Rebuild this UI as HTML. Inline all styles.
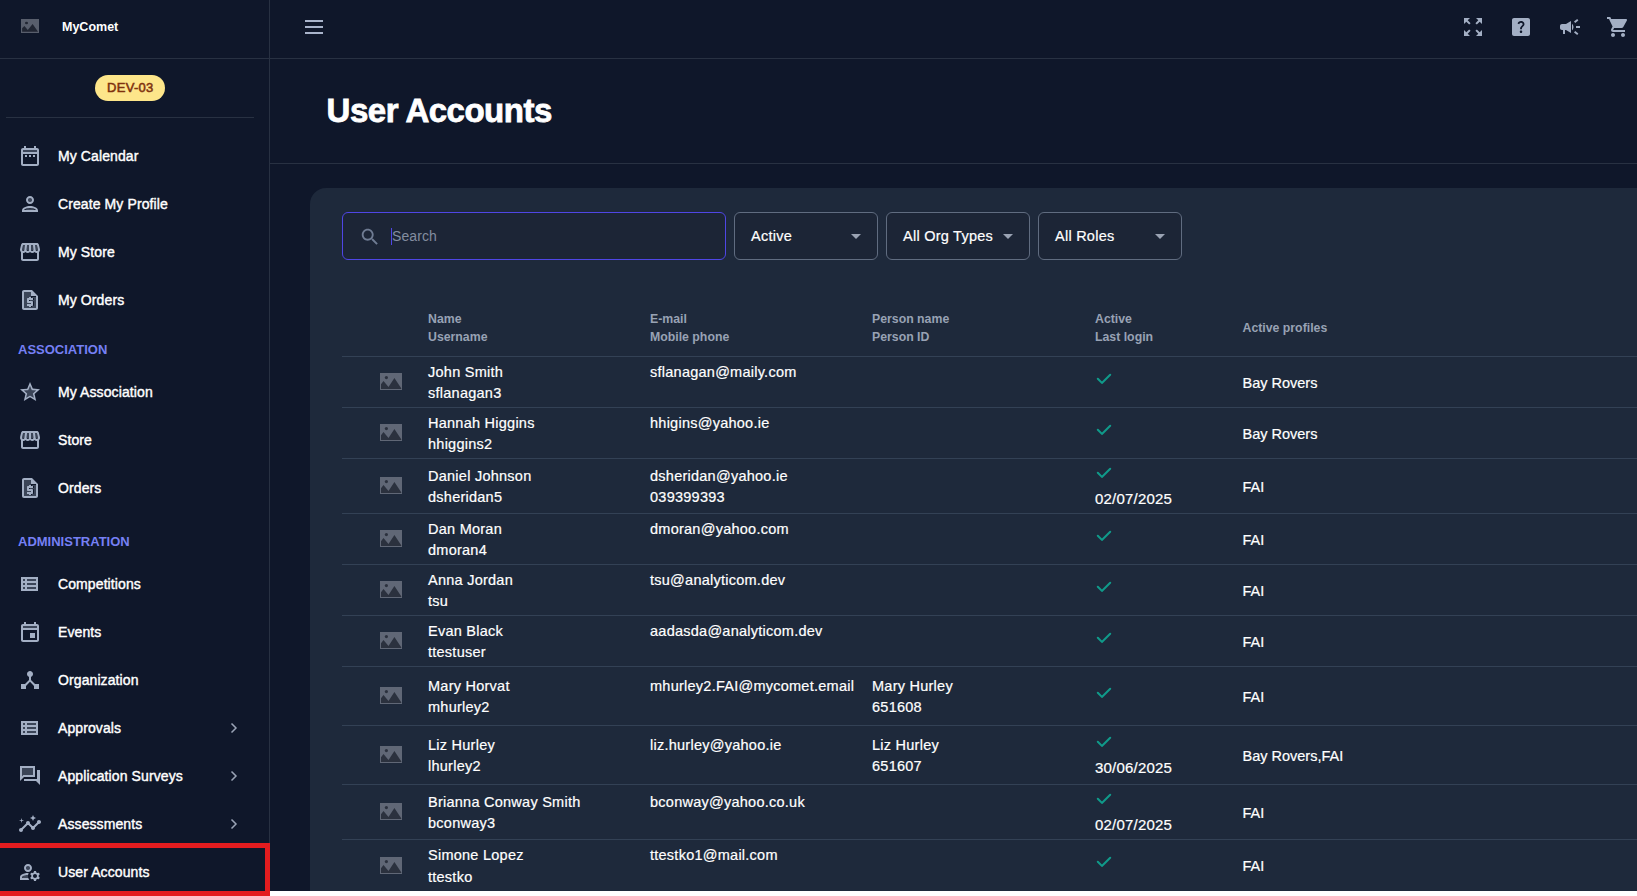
<!DOCTYPE html>
<html><head><meta charset="utf-8"><title>User Accounts</title>
<style>
html,body{margin:0;padding:0}
body{width:1637px;height:896px;overflow:hidden;position:relative;background:#0f172a;font-family:"Liberation Sans",sans-serif}
.abs{position:absolute}
.t{position:absolute;white-space:nowrap}
svg{display:block}
</style></head><body>
<div class="abs" style="left:269px;top:0;width:1px;height:891px;background:#283142"></div>
<div class="abs" style="left:0;top:58px;width:1637px;height:1px;background:#283142"></div>
<svg class="abs" style="left:21px;top:19px" width="18" height="14" viewBox="0 0 18 14"><rect width="18" height="14" fill="#585e6c"/><path d="M1.1 9.3 L3.4 7 L6.8 11 L11.6 5 L16.9 12.4 V12.7 H1.1 Z" fill="#202532"/><ellipse cx="5.5" cy="4" rx="1.5" ry="1.2" fill="#202532"/></svg>
<div class="t" style="left:62px;top:21.42px;font-size:12.5px;line-height:12.5px;color:#fff;font-weight:700;letter-spacing:0px;">MyComet</div>
<div class="abs" style="left:95px;top:75px;width:70px;height:26px;border-radius:13px;background:#fde68a"></div>
<div class="t" style="left:107px;top:81.00px;font-size:13px;line-height:13px;color:#7f310e;font-weight:400;letter-spacing:0.3px;-webkit-text-stroke:0.55px #7f310e;">DEV-03</div>
<div class="abs" style="left:6px;top:117px;width:248px;height:1px;background:#283142"></div>
<svg style="position:absolute;left:18px;top:144px" width="24" height="24" viewBox="0 0 24 24" fill="#a3afc4"><path d="M5 6h14v2H5z" opacity=".3"/><path d="M7 11h2v2H7v-2zm14-5v14c0 1.1-.9 2-2 2H5c-1.11 0-2-.9-2-2l.01-14c0-1.1.88-2 1.99-2h1V2h2v2h8V2h2v2h1c1.1 0 2 .9 2 2zM5 8h14V6H5v2zm14 12V10H5v10h14zm-4-7h2v-2h-2v2zm-4 0h2v-2h-2v2z"/></svg>
<div class="t" style="left:58px;top:149.15px;font-size:14px;line-height:14px;color:#fff;font-weight:400;letter-spacing:0.1px;-webkit-text-stroke:0.4px #fff;">My Calendar</div>
<svg style="position:absolute;left:18px;top:192px" width="24" height="24" viewBox="0 0 24 24" fill="#a3afc4"><circle cx="12" cy="8" r="2" opacity=".3"/><path d="M6 19.5c.2-1.4 3-3 6-3s5.8 1.6 6 3z" opacity=".3"/><path d="M12 14c-3.5 0-8 1.6-8 4.5V20h16v-1.5c0-2.9-4.5-4.5-8-4.5zm-6 4c.4-1.2 3.3-2.1 6-2.1s5.6.9 6 2.1H6zM12 12c2.21 0 4-1.79 4-4s-1.79-4-4-4-4 1.79-4 4 1.79 4 4 4zm0-6c1.1 0 2 .9 2 2s-.9 2-2 2-2-.9-2-2 .9-2 2-2z"/></svg>
<div class="t" style="left:58px;top:197.15px;font-size:14px;line-height:14px;color:#fff;font-weight:400;letter-spacing:0.1px;-webkit-text-stroke:0.4px #fff;">Create My Profile</div>
<svg style="position:absolute;left:18px;top:240px" width="24" height="24" viewBox="0 0 24 24" fill="#a3afc4"><path d="M5 5h14l1.2 5H3.8z" opacity=".3"/><path d="M21.9 8.89l-1.05-4.37c-.22-.9-1-1.52-1.91-1.52H5.05c-.9 0-1.69.63-1.9 1.52L2.1 8.89c-.24 1.02-.02 2.06.62 2.88.08.11.19.19.28.29V19c0 1.1.9 2 2 2h14c1.1 0 2-.9 2-2v-6.94c.09-.09.2-.18.28-.28.64-.82.87-1.87.62-2.89zm-2.99-3.9l1.05 4.37c.1.42.01.84-.25 1.17-.14.18-.44.47-.94.47-.61 0-1.14-.49-1.21-1.14L16.98 5l1.93-.01zM13 5h1.96l.54 4.52c.05.39-.07.78-.33 1.07-.22.26-.54.41-.95.41-.67 0-1.22-.59-1.22-1.31V5zM8.49 9.52L9.04 5H11v4.69c0 .72-.55 1.31-1.29 1.31-.34 0-.65-.15-.89-.41-.25-.29-.37-.68-.33-1.07zm-4.45-.16L5.05 5h1.97l-.58 4.86c-.08.65-.6 1.14-1.21 1.14-.49 0-.8-.29-.93-.47-.27-.32-.36-.75-.26-1.17zM5 19v-6.03c.08.01.15.03.23.03.87 0 1.66-.36 2.24-.95.6.6 1.4.95 2.31.95.87 0 1.65-.36 2.23-.93.59.57 1.39.93 2.29.93.84 0 1.64-.35 2.24-.95.58.59 1.37.95 2.24.95.08 0 .15-.02.23-.03V19H5z"/></svg>
<div class="t" style="left:58px;top:245.15px;font-size:14px;line-height:14px;color:#fff;font-weight:400;letter-spacing:0.1px;-webkit-text-stroke:0.4px #fff;">My Store</div>
<svg style="position:absolute;left:18px;top:288px" width="24" height="24" viewBox="0 0 24 24" fill="#a3afc4"><path d="M13 4H6v16h12V9h-5V4zm3 10v3c0 .55-.45 1-1 1h-1v1h-2v-1h-2v-2h4v-1h-3c-.55 0-1-.45-1-1v-3c0-.55.45-1 1-1h1V9h2v1h2v2h-4v1h3c.55 0 1 .45 1 1z" opacity=".3"/><path d="M14 2H6c-1.1 0-1.99.9-1.99 2L4 20c0 1.1.89 2 1.99 2H18c1.1 0 2-.9 2-2V8l-6-6zM6 20V4h7v4h5v12H6zm5-1h2v-1h1c.55 0 1-.45 1-1v-3c0-.55-.45-1-1-1h-3v-1h4v-2h-2V9h-2v1h-1c-.55 0-1 .45-1 1v3c0 .55.45 1 1 1h3v1H9v2h2v1z"/><path d="M14 3.5V8h4.5z"/></svg>
<div class="t" style="left:58px;top:293.15px;font-size:14px;line-height:14px;color:#fff;font-weight:400;letter-spacing:0.1px;-webkit-text-stroke:0.4px #fff;">My Orders</div>
<svg style="position:absolute;left:18px;top:380px" width="24" height="24" viewBox="0 0 24 24" fill="#a3afc4"><path d="M12 15.4l-3.76 2.27 1-4.28-3.32-2.88 4.38-.38L12 6.1l1.71 4.04 4.38.38-3.32 2.88 1 4.28z" opacity=".3"/><path d="M22 9.24l-7.19-.62L12 2 9.19 8.63 2 9.24l5.46 4.73L5.82 21 12 17.27 18.18 21l-1.63-7.03L22 9.24zM12 15.4l-3.76 2.27 1-4.28-3.32-2.88 4.38-.38L12 6.1l1.71 4.04 4.38.38-3.32 2.88 1 4.28L12 15.4z"/></svg>
<div class="t" style="left:58px;top:385.15px;font-size:14px;line-height:14px;color:#fff;font-weight:400;letter-spacing:0.1px;-webkit-text-stroke:0.4px #fff;">My Association</div>
<svg style="position:absolute;left:18px;top:428px" width="24" height="24" viewBox="0 0 24 24" fill="#a3afc4"><path d="M5 5h14l1.2 5H3.8z" opacity=".3"/><path d="M21.9 8.89l-1.05-4.37c-.22-.9-1-1.52-1.91-1.52H5.05c-.9 0-1.69.63-1.9 1.52L2.1 8.89c-.24 1.02-.02 2.06.62 2.88.08.11.19.19.28.29V19c0 1.1.9 2 2 2h14c1.1 0 2-.9 2-2v-6.94c.09-.09.2-.18.28-.28.64-.82.87-1.87.62-2.89zm-2.99-3.9l1.05 4.37c.1.42.01.84-.25 1.17-.14.18-.44.47-.94.47-.61 0-1.14-.49-1.21-1.14L16.98 5l1.93-.01zM13 5h1.96l.54 4.52c.05.39-.07.78-.33 1.07-.22.26-.54.41-.95.41-.67 0-1.22-.59-1.22-1.31V5zM8.49 9.52L9.04 5H11v4.69c0 .72-.55 1.31-1.29 1.31-.34 0-.65-.15-.89-.41-.25-.29-.37-.68-.33-1.07zm-4.45-.16L5.05 5h1.97l-.58 4.86c-.08.65-.6 1.14-1.21 1.14-.49 0-.8-.29-.93-.47-.27-.32-.36-.75-.26-1.17zM5 19v-6.03c.08.01.15.03.23.03.87 0 1.66-.36 2.24-.95.6.6 1.4.95 2.31.95.87 0 1.65-.36 2.23-.93.59.57 1.39.93 2.29.93.84 0 1.64-.35 2.24-.95.58.59 1.37.95 2.24.95.08 0 .15-.02.23-.03V19H5z"/></svg>
<div class="t" style="left:58px;top:433.15px;font-size:14px;line-height:14px;color:#fff;font-weight:400;letter-spacing:0.1px;-webkit-text-stroke:0.4px #fff;">Store</div>
<svg style="position:absolute;left:18px;top:476px" width="24" height="24" viewBox="0 0 24 24" fill="#a3afc4"><path d="M13 4H6v16h12V9h-5V4zm3 10v3c0 .55-.45 1-1 1h-1v1h-2v-1h-2v-2h4v-1h-3c-.55 0-1-.45-1-1v-3c0-.55.45-1 1-1h1V9h2v1h2v2h-4v1h3c.55 0 1 .45 1 1z" opacity=".3"/><path d="M14 2H6c-1.1 0-1.99.9-1.99 2L4 20c0 1.1.89 2 1.99 2H18c1.1 0 2-.9 2-2V8l-6-6zM6 20V4h7v4h5v12H6zm5-1h2v-1h1c.55 0 1-.45 1-1v-3c0-.55-.45-1-1-1h-3v-1h4v-2h-2V9h-2v1h-1c-.55 0-1 .45-1 1v3c0 .55.45 1 1 1h3v1H9v2h2v1z"/><path d="M14 3.5V8h4.5z"/></svg>
<div class="t" style="left:58px;top:481.15px;font-size:14px;line-height:14px;color:#fff;font-weight:400;letter-spacing:0.1px;-webkit-text-stroke:0.4px #fff;">Orders</div>
<svg style="position:absolute;left:18px;top:572px" width="24" height="24" viewBox="0 0 24 24" fill="#a3afc4"><path d="M5 7h2v2H5zm0 4h2v2H5zm0 4h2v2H5zm4-8h9v2H9zm0 4h9v2H9zm0 4h9v2H9z" opacity=".3"/><path d="M3 5v14h17V5H3zm4 2v2H5V7h2zm-2 6v-2h2v2H5zm0 2h2v2H5v-2zm13 2H9v-2h9v2zm0-4H9v-2h9v2zm0-4H9V7h9v2z"/></svg>
<div class="t" style="left:58px;top:577.15px;font-size:14px;line-height:14px;color:#fff;font-weight:400;letter-spacing:0.1px;-webkit-text-stroke:0.4px #fff;">Competitions</div>
<svg style="position:absolute;left:18px;top:620px" width="24" height="24" viewBox="0 0 24 24" fill="#a3afc4"><path d="M5 6h14v2H5z" opacity=".3"/><path d="M19 4h-1V2h-2v2H8V2H6v2H5c-1.11 0-1.99.9-1.99 2L3 20c0 1.1.89 2 2 2h14c1.1 0 2-.9 2-2V6c0-1.1-.9-2-2-2zm0 16H5V10h14v10zm0-12H5V6h14v2zm-7 5h5v5h-5z"/></svg>
<div class="t" style="left:58px;top:625.15px;font-size:14px;line-height:14px;color:#fff;font-weight:400;letter-spacing:0.1px;-webkit-text-stroke:0.4px #fff;">Events</div>
<svg style="position:absolute;left:18px;top:668px" width="24" height="24" viewBox="0 0 24 24" fill="#a3afc4"><path d="M17 16l-4-4V8.82C14.16 8.4 15 7.3 15 6c0-1.66-1.34-3-3-3S9 4.34 9 6c0 1.3.84 2.4 2 2.82V12l-4 4H3v5h5v-3.05l4-4.2 4 4.2V21h5v-5h-4z"/></svg>
<div class="t" style="left:58px;top:673.15px;font-size:14px;line-height:14px;color:#fff;font-weight:400;letter-spacing:0.1px;-webkit-text-stroke:0.4px #fff;">Organization</div>
<svg style="position:absolute;left:18px;top:716px" width="24" height="24" viewBox="0 0 24 24" fill="#a3afc4"><path d="M5 7h2v2H5zm0 4h2v2H5zm0 4h2v2H5zm4-8h9v2H9zm0 4h9v2H9zm0 4h9v2H9z" opacity=".3"/><path d="M3 5v14h17V5H3zm4 2v2H5V7h2zm-2 6v-2h2v2H5zm0 2h2v2H5v-2zm13 2H9v-2h9v2zm0-4H9v-2h9v2zm0-4H9V7h9v2z"/></svg>
<div class="t" style="left:58px;top:721.15px;font-size:14px;line-height:14px;color:#fff;font-weight:400;letter-spacing:0.1px;-webkit-text-stroke:0.4px #fff;">Approvals</div>
<svg class="abs" style="left:228px;top:722px" width="12" height="12" viewBox="0 0 12 12"><path d="M3.5 1.5 L8 6 L3.5 10.5" fill="none" stroke="#9aa4b6" stroke-width="1.5"/></svg>
<svg style="position:absolute;left:18px;top:764px" width="24" height="24" viewBox="0 0 24 24" fill="#a3afc4"><path d="M15 4H4v8.17L5.17 11H15z" opacity=".3"/><path d="M21 6h-2v9H6v2h12l4 4V6zm-4 6V2H2v15l4-4h11V12zM15 4v7H5.17L4 12.17V4h11z"/></svg>
<div class="t" style="left:58px;top:769.15px;font-size:14px;line-height:14px;color:#fff;font-weight:400;letter-spacing:0.1px;-webkit-text-stroke:0.4px #fff;">Application Surveys</div>
<svg class="abs" style="left:228px;top:770px" width="12" height="12" viewBox="0 0 12 12"><path d="M3.5 1.5 L8 6 L3.5 10.5" fill="none" stroke="#9aa4b6" stroke-width="1.5"/></svg>
<svg style="position:absolute;left:18px;top:812px" width="24" height="24" viewBox="0 0 24 24" fill="#a3afc4"><path d="M21 8c-1.45 0-2.26 1.44-1.93 2.51l-3.55 3.56c-.3-.09-.74-.09-1.04 0l-2.55-2.55C12.27 10.45 11.46 9 10 9c-1.45 0-2.27 1.44-1.93 2.52l-4.56 4.55C2.44 15.74 1 16.55 1 18c0 1.1.9 2 2 2 1.45 0 2.26-1.44 1.93-2.51l4.55-4.56c.3.09.74.09 1.04 0l2.55 2.55C12.73 16.55 13.54 18 15 18c1.45 0 2.27-1.44 1.93-2.52l3.56-3.55c1.07.33 2.51-.48 2.51-1.93 0-1.1-.9-2-2-2zM15 9l.94-2.07L18 6l-2.06-.93L15 3l-.92 2.07L12 6l2.08.93zM3.5 11L4 9l2-.5L4 8l-.5-2L3 8l-2 .5L3 9z"/></svg>
<div class="t" style="left:58px;top:817.15px;font-size:14px;line-height:14px;color:#fff;font-weight:400;letter-spacing:0.1px;-webkit-text-stroke:0.4px #fff;">Assessments</div>
<svg class="abs" style="left:228px;top:818px" width="12" height="12" viewBox="0 0 12 12"><path d="M3.5 1.5 L8 6 L3.5 10.5" fill="none" stroke="#9aa4b6" stroke-width="1.5"/></svg>
<svg style="position:absolute;left:18px;top:860px" width="24" height="24" viewBox="0 0 24 24" fill="#a3afc4"><circle cx="10" cy="8" r="2" opacity=".3"/><path d="M4.2 17.3c0-.3.2-.6.4-.75C6.2 15.6 8.1 15 10 15h.08c-.05.33-.08.66-.08 1 0 .7.1 1.37.29 2H4.2z" opacity=".3"/><path d="M4 18v-.65c0-.34.16-.66.41-.81C6.1 15.53 8.03 15 10 15c.03 0 .05 0 .08.01.1-.7.3-1.37.59-1.98-.22-.02-.44-.03-.67-.03-2.42 0-4.68.67-6.61 1.82-.88.52-1.39 1.5-1.39 2.53V20h9.26c-.42-.6-.75-1.28-.97-2H4zM10 12c2.21 0 4-1.79 4-4s-1.79-4-4-4-4 1.79-4 4 1.79 4 4 4zm0-6c1.1 0 2 .9 2 2s-.9 2-2 2-2-.9-2-2 .9-2 2-2zM20.75 16c0-.22-.03-.42-.06-.63l1.14-1.01-1-1.73-1.45.49c-.32-.27-.68-.48-1.08-.63L18 11h-2l-.3 1.49c-.4.15-.76.36-1.08.63l-1.45-.49-1 1.73 1.14 1.01c-.03.21-.06.41-.06.63s.03.42.06.63l-1.14 1.01 1 1.73 1.45-.49c.32.27.68.48 1.08.63L16 21h2l.3-1.49c.4-.15.76-.36 1.08-.63l1.45.49 1-1.73-1.14-1.01c.03-.21.06-.41.06-.63zM17 18c-1.1 0-2-.9-2-2s.9-2 2-2 2 .9 2 2-.9 2-2 2z"/></svg>
<div class="t" style="left:58px;top:865.15px;font-size:14px;line-height:14px;color:#fff;font-weight:400;letter-spacing:0.1px;-webkit-text-stroke:0.4px #fff;">User Accounts</div>
<div class="t" style="left:18px;top:343.00px;font-size:13px;line-height:13px;color:#7680f5;font-weight:700;letter-spacing:0px;">ASSOCIATION</div>
<div class="t" style="left:18px;top:535.00px;font-size:13px;line-height:13px;color:#7680f5;font-weight:700;letter-spacing:0px;">ADMINISTRATION</div>
<div class="abs" style="left:305px;top:20px;width:18px;height:2px;background:#a9b4cb"></div>
<div class="abs" style="left:305px;top:26px;width:18px;height:2px;background:#a9b4cb"></div>
<div class="abs" style="left:305px;top:32px;width:18px;height:2px;background:#a9b4cb"></div>
<svg style="position:absolute;left:1461px;top:15px" width="24" height="24" viewBox="0 0 24 24" fill="#a3afc4"><path d="M15 3l2.3 2.3-2.89 2.87 1.42 1.42L18.7 6.7 21 9V3zM3 9l2.3-2.3 2.87 2.89 1.42-1.42L6.7 5.3 9 3H3zm6 12l-2.3-2.3 2.89-2.87-1.42-1.42L5.3 17.3 3 15v6zm12-6l-2.3 2.3-2.87-2.89-1.42 1.42 2.89 2.87L15 21h6z"/></svg>
<svg style="position:absolute;left:1509px;top:15px" width="24" height="24" viewBox="0 0 24 24" fill="#a3afc4"><path d="M19 3H5c-1.1 0-2 .9-2 2v14c0 1.1.9 2 2 2h14c1.1 0 2-.9 2-2V5c0-1.1-.9-2-2-2zm-6.99 15c-.7 0-1.26-.56-1.26-1.26 0-.71.56-1.25 1.26-1.25.71 0 1.25.54 1.25 1.25-.01.69-.54 1.26-1.25 1.26zm3.01-7.4c-.76 1.11-1.48 1.46-1.87 2.17-.16.29-.22.48-.22 1.41h-1.82c0-.49-.08-1.29.31-1.98.49-.87 1.42-1.39 1.96-2.16.57-.81.25-2.33-1.37-2.33-1.06 0-1.58.8-1.8 1.48l-1.65-.7C9.01 7.15 10.22 6 11.99 6c1.48 0 2.49.67 3.01 1.52.44.72.7 2.09.02 3.08z"/></svg>
<svg style="position:absolute;left:1557.5px;top:15px" width="24" height="24" viewBox="0 0 24 24" fill="#a3afc4"><path d="M18 11v2h4v-2h-4zm-2 6.61c.96.71 2.21 1.65 3.2 2.39.4-.53.8-1.07 1.2-1.6-.99-.74-2.24-1.68-3.2-2.4-.4.54-.8 1.08-1.2 1.61zM20.4 5.6c-.4-.53-.8-1.07-1.2-1.6-.99.74-2.24 1.68-3.2 2.4.4.53.8 1.07 1.2 1.6.96-.72 2.21-1.65 3.2-2.4zM4 9c-1.1 0-2 .9-2 2v2c0 1.1.9 2 2 2h1v4h2v-4h1l5 3V6L8 9H4zm11.5 3c0-1.33-.58-2.53-1.5-3.35v6.69c.92-.81 1.5-2.01 1.5-3.34z"/></svg>
<svg style="position:absolute;left:1605.6px;top:15px" width="24" height="24" viewBox="0 0 24 24" fill="#a3afc4"><path d="M7 18c-1.1 0-1.99.9-1.99 2S5.9 22 7 22s2-.9 2-2-.9-2-2-2zM1 2v2h2l3.6 7.59-1.35 2.45c-.16.28-.25.61-.25.96 0 1.1.9 2 2 2h12v-2H7.42c-.14 0-.25-.11-.25-.25l.03-.12.9-1.63h7.45c.75 0 1.41-.41 1.75-1.03l3.58-6.49c.08-.14.12-.31.12-.48 0-.55-.45-1-1-1H5.21l-.94-2H1zm16 16c-1.1 0-1.99.9-1.99 2s.89 2 1.99 2 2-.9 2-2-.9-2-2-2z"/></svg>
<div class="t" style="left:326.6px;top:94.47px;font-size:33px;line-height:33px;color:#fff;font-weight:700;letter-spacing:-0.5px;-webkit-text-stroke:0.8px #fff;">User Accounts</div>
<div class="abs" style="left:270px;top:163px;width:1367px;height:1px;background:#283142"></div>
<div class="abs" style="left:310px;top:188px;width:1400px;height:800px;border-radius:16px;background:#1e293b"></div>
<div class="abs" style="left:342px;top:212px;width:384px;height:48px;box-sizing:border-box;border:1px solid #4f46e5;border-radius:6px;background:#1c2536"></div>
<svg style="position:absolute;left:358.6px;top:225.6px" width="22" height="22" viewBox="0 0 24 24" fill="#6f7c93"><path d="M15.5 14h-.79l-.28-.27C15.41 12.59 16 11.11 16 9.5 16 5.91 13.09 3 9.5 3S3 5.91 3 9.5 5.91 16 9.5 16c1.61 0 3.09-.59 4.23-1.57l.27.28v.79l5 4.99L20.49 19l-4.99-5zm-6 0C7.01 14 5 11.99 5 9.5S7.01 5 9.5 5 14 7.01 14 9.5 11.99 14 9.5 14z"/></svg>
<div class="abs" style="left:391px;top:228px;width:1px;height:17px;background:#4f46e5"></div>
<div class="t" style="left:392px;top:229.15px;font-size:14px;line-height:14px;color:#838da0;font-weight:400;letter-spacing:0.1px;">Search</div>
<div class="abs" style="left:734px;top:212px;width:144px;height:48px;box-sizing:border-box;border:1px solid #606c80;border-radius:6px;background:#1c2536"></div>
<div class="t" style="left:751px;top:228.73px;font-size:14.5px;line-height:14.5px;color:#fff;font-weight:400;letter-spacing:0.25px;-webkit-text-stroke:0.2px #fff;">Active</div>
<svg class="abs" style="left:851px;top:234px" width="10" height="6" viewBox="0 0 10 6"><path d="M0 0 L10 0 L5 5 Z" fill="#9aa3b3"/></svg>
<div class="abs" style="left:886px;top:212px;width:144px;height:48px;box-sizing:border-box;border:1px solid #606c80;border-radius:6px;background:#1c2536"></div>
<div class="t" style="left:903px;top:228.73px;font-size:14.5px;line-height:14.5px;color:#fff;font-weight:400;letter-spacing:0.25px;-webkit-text-stroke:0.2px #fff;">All Org Types</div>
<svg class="abs" style="left:1003px;top:234px" width="10" height="6" viewBox="0 0 10 6"><path d="M0 0 L10 0 L5 5 Z" fill="#9aa3b3"/></svg>
<div class="abs" style="left:1038px;top:212px;width:144px;height:48px;box-sizing:border-box;border:1px solid #606c80;border-radius:6px;background:#1c2536"></div>
<div class="t" style="left:1055px;top:228.73px;font-size:14.5px;line-height:14.5px;color:#fff;font-weight:400;letter-spacing:0.25px;-webkit-text-stroke:0.2px #fff;">All Roles</div>
<svg class="abs" style="left:1155px;top:234px" width="10" height="6" viewBox="0 0 10 6"><path d="M0 0 L10 0 L5 5 Z" fill="#9aa3b3"/></svg>
<div class="t" style="left:428px;top:312.79px;font-size:12.3px;line-height:12.3px;color:#98a2b4;font-weight:700;letter-spacing:0px;">Name</div>
<div class="t" style="left:428px;top:330.89px;font-size:12.3px;line-height:12.3px;color:#98a2b4;font-weight:700;letter-spacing:0px;">Username</div>
<div class="t" style="left:650px;top:312.79px;font-size:12.3px;line-height:12.3px;color:#98a2b4;font-weight:700;letter-spacing:0px;">E-mail</div>
<div class="t" style="left:650px;top:330.89px;font-size:12.3px;line-height:12.3px;color:#98a2b4;font-weight:700;letter-spacing:0px;">Mobile phone</div>
<div class="t" style="left:872px;top:312.79px;font-size:12.3px;line-height:12.3px;color:#98a2b4;font-weight:700;letter-spacing:0px;">Person name</div>
<div class="t" style="left:872px;top:330.89px;font-size:12.3px;line-height:12.3px;color:#98a2b4;font-weight:700;letter-spacing:0px;">Person ID</div>
<div class="t" style="left:1095px;top:312.79px;font-size:12.3px;line-height:12.3px;color:#98a2b4;font-weight:700;letter-spacing:0px;">Active</div>
<div class="t" style="left:1095px;top:330.89px;font-size:12.3px;line-height:12.3px;color:#98a2b4;font-weight:700;letter-spacing:0px;">Last login</div>
<div class="t" style="left:1242.5px;top:321.69px;font-size:12.3px;line-height:12.3px;color:#98a2b4;font-weight:700;letter-spacing:0px;">Active profiles</div>
<div class="abs" style="left:342px;top:356px;width:1300px;height:1px;background:#334155"></div>
<svg class="abs" style="left:380px;top:373.0px" width="22" height="17" viewBox="0 0 22 17"><rect width="22" height="17" fill="#606776"/><path d="M1 11.2 L3.5 8 L8.5 14 L14.4 5 L21.2 15.3 V16 H1 Z" fill="#2b313e"/><circle cx="6.4" cy="4.6" r="1.6" fill="#2b313e"/></svg>
<div class="t" style="left:428px;top:364.73px;font-size:14.5px;line-height:14.5px;color:#fff;font-weight:400;letter-spacing:0.25px;-webkit-text-stroke:0.2px #fff;">John Smith</div>
<div class="t" style="left:428px;top:386.23px;font-size:14.5px;line-height:14.5px;color:#fff;font-weight:400;letter-spacing:0.25px;-webkit-text-stroke:0.2px #fff;">sflanagan3</div>
<div class="t" style="left:650px;top:364.73px;font-size:14.5px;line-height:14.5px;color:#fff;font-weight:400;letter-spacing:0.25px;-webkit-text-stroke:0.2px #fff;">sflanagan@maily.com</div>
<svg class="abs" style="left:1094px;top:371.90px" width="20" height="14" viewBox="0 0 20 14"><path d="M3.8 6.8 L7.9 10.9 L16.2 2.8" fill="none" stroke="#109a8a" stroke-width="2.05" stroke-linecap="round" stroke-linejoin="round"/></svg>
<div class="t" style="left:1242.5px;top:375.73px;font-size:14.5px;line-height:14.5px;color:#fff;font-weight:400;letter-spacing:0px;-webkit-text-stroke:0.2px #fff;">Bay Rovers</div>
<div class="abs" style="left:342px;top:407px;width:1300px;height:1px;background:#334155"></div>
<svg class="abs" style="left:380px;top:424.0px" width="22" height="17" viewBox="0 0 22 17"><rect width="22" height="17" fill="#606776"/><path d="M1 11.2 L3.5 8 L8.5 14 L14.4 5 L21.2 15.3 V16 H1 Z" fill="#2b313e"/><circle cx="6.4" cy="4.6" r="1.6" fill="#2b313e"/></svg>
<div class="t" style="left:428px;top:415.73px;font-size:14.5px;line-height:14.5px;color:#fff;font-weight:400;letter-spacing:0.25px;-webkit-text-stroke:0.2px #fff;">Hannah Higgins</div>
<div class="t" style="left:428px;top:437.23px;font-size:14.5px;line-height:14.5px;color:#fff;font-weight:400;letter-spacing:0.25px;-webkit-text-stroke:0.2px #fff;">hhiggins2</div>
<div class="t" style="left:650px;top:415.73px;font-size:14.5px;line-height:14.5px;color:#fff;font-weight:400;letter-spacing:0.25px;-webkit-text-stroke:0.2px #fff;">hhigins@yahoo.ie</div>
<svg class="abs" style="left:1094px;top:422.90px" width="20" height="14" viewBox="0 0 20 14"><path d="M3.8 6.8 L7.9 10.9 L16.2 2.8" fill="none" stroke="#109a8a" stroke-width="2.05" stroke-linecap="round" stroke-linejoin="round"/></svg>
<div class="t" style="left:1242.5px;top:426.73px;font-size:14.5px;line-height:14.5px;color:#fff;font-weight:400;letter-spacing:0px;-webkit-text-stroke:0.2px #fff;">Bay Rovers</div>
<div class="abs" style="left:342px;top:458px;width:1300px;height:1px;background:#334155"></div>
<svg class="abs" style="left:380px;top:477.0px" width="22" height="17" viewBox="0 0 22 17"><rect width="22" height="17" fill="#606776"/><path d="M1 11.2 L3.5 8 L8.5 14 L14.4 5 L21.2 15.3 V16 H1 Z" fill="#2b313e"/><circle cx="6.4" cy="4.6" r="1.6" fill="#2b313e"/></svg>
<div class="t" style="left:428px;top:468.73px;font-size:14.5px;line-height:14.5px;color:#fff;font-weight:400;letter-spacing:0.25px;-webkit-text-stroke:0.2px #fff;">Daniel Johnson</div>
<div class="t" style="left:428px;top:490.23px;font-size:14.5px;line-height:14.5px;color:#fff;font-weight:400;letter-spacing:0.25px;-webkit-text-stroke:0.2px #fff;">dsheridan5</div>
<div class="t" style="left:650px;top:468.73px;font-size:14.5px;line-height:14.5px;color:#fff;font-weight:400;letter-spacing:0.25px;-webkit-text-stroke:0.2px #fff;">dsheridan@yahoo.ie</div>
<div class="t" style="left:650px;top:490.23px;font-size:14.5px;line-height:14.5px;color:#fff;font-weight:400;letter-spacing:0.25px;-webkit-text-stroke:0.2px #fff;">039399393</div>
<svg class="abs" style="left:1094px;top:466.00px" width="20" height="14" viewBox="0 0 20 14"><path d="M3.8 6.8 L7.9 10.9 L16.2 2.8" fill="none" stroke="#109a8a" stroke-width="2.05" stroke-linecap="round" stroke-linejoin="round"/></svg>
<div class="t" style="left:1095px;top:490.70px;font-size:15px;line-height:15px;color:#fff;font-weight:400;letter-spacing:0.2px;-webkit-text-stroke:0.2px #fff;">02/07/2025</div>
<div class="t" style="left:1242.5px;top:479.73px;font-size:14.5px;line-height:14.5px;color:#fff;font-weight:400;letter-spacing:0px;-webkit-text-stroke:0.2px #fff;">FAI</div>
<div class="abs" style="left:342px;top:513px;width:1300px;height:1px;background:#334155"></div>
<svg class="abs" style="left:380px;top:530.0px" width="22" height="17" viewBox="0 0 22 17"><rect width="22" height="17" fill="#606776"/><path d="M1 11.2 L3.5 8 L8.5 14 L14.4 5 L21.2 15.3 V16 H1 Z" fill="#2b313e"/><circle cx="6.4" cy="4.6" r="1.6" fill="#2b313e"/></svg>
<div class="t" style="left:428px;top:521.73px;font-size:14.5px;line-height:14.5px;color:#fff;font-weight:400;letter-spacing:0.25px;-webkit-text-stroke:0.2px #fff;">Dan Moran</div>
<div class="t" style="left:428px;top:543.23px;font-size:14.5px;line-height:14.5px;color:#fff;font-weight:400;letter-spacing:0.25px;-webkit-text-stroke:0.2px #fff;">dmoran4</div>
<div class="t" style="left:650px;top:521.73px;font-size:14.5px;line-height:14.5px;color:#fff;font-weight:400;letter-spacing:0.25px;-webkit-text-stroke:0.2px #fff;">dmoran@yahoo.com</div>
<svg class="abs" style="left:1094px;top:528.90px" width="20" height="14" viewBox="0 0 20 14"><path d="M3.8 6.8 L7.9 10.9 L16.2 2.8" fill="none" stroke="#109a8a" stroke-width="2.05" stroke-linecap="round" stroke-linejoin="round"/></svg>
<div class="t" style="left:1242.5px;top:532.73px;font-size:14.5px;line-height:14.5px;color:#fff;font-weight:400;letter-spacing:0px;-webkit-text-stroke:0.2px #fff;">FAI</div>
<div class="abs" style="left:342px;top:564px;width:1300px;height:1px;background:#334155"></div>
<svg class="abs" style="left:380px;top:581.0px" width="22" height="17" viewBox="0 0 22 17"><rect width="22" height="17" fill="#606776"/><path d="M1 11.2 L3.5 8 L8.5 14 L14.4 5 L21.2 15.3 V16 H1 Z" fill="#2b313e"/><circle cx="6.4" cy="4.6" r="1.6" fill="#2b313e"/></svg>
<div class="t" style="left:428px;top:572.73px;font-size:14.5px;line-height:14.5px;color:#fff;font-weight:400;letter-spacing:0.25px;-webkit-text-stroke:0.2px #fff;">Anna Jordan</div>
<div class="t" style="left:428px;top:594.23px;font-size:14.5px;line-height:14.5px;color:#fff;font-weight:400;letter-spacing:0.25px;-webkit-text-stroke:0.2px #fff;">tsu</div>
<div class="t" style="left:650px;top:572.73px;font-size:14.5px;line-height:14.5px;color:#fff;font-weight:400;letter-spacing:0.25px;-webkit-text-stroke:0.2px #fff;">tsu@analyticom.dev</div>
<svg class="abs" style="left:1094px;top:579.90px" width="20" height="14" viewBox="0 0 20 14"><path d="M3.8 6.8 L7.9 10.9 L16.2 2.8" fill="none" stroke="#109a8a" stroke-width="2.05" stroke-linecap="round" stroke-linejoin="round"/></svg>
<div class="t" style="left:1242.5px;top:583.73px;font-size:14.5px;line-height:14.5px;color:#fff;font-weight:400;letter-spacing:0px;-webkit-text-stroke:0.2px #fff;">FAI</div>
<div class="abs" style="left:342px;top:615px;width:1300px;height:1px;background:#334155"></div>
<svg class="abs" style="left:380px;top:632.0px" width="22" height="17" viewBox="0 0 22 17"><rect width="22" height="17" fill="#606776"/><path d="M1 11.2 L3.5 8 L8.5 14 L14.4 5 L21.2 15.3 V16 H1 Z" fill="#2b313e"/><circle cx="6.4" cy="4.6" r="1.6" fill="#2b313e"/></svg>
<div class="t" style="left:428px;top:623.73px;font-size:14.5px;line-height:14.5px;color:#fff;font-weight:400;letter-spacing:0.25px;-webkit-text-stroke:0.2px #fff;">Evan Black</div>
<div class="t" style="left:428px;top:645.23px;font-size:14.5px;line-height:14.5px;color:#fff;font-weight:400;letter-spacing:0.25px;-webkit-text-stroke:0.2px #fff;">ttestuser</div>
<div class="t" style="left:650px;top:623.73px;font-size:14.5px;line-height:14.5px;color:#fff;font-weight:400;letter-spacing:0.25px;-webkit-text-stroke:0.2px #fff;">aadasda@analyticom.dev</div>
<svg class="abs" style="left:1094px;top:630.90px" width="20" height="14" viewBox="0 0 20 14"><path d="M3.8 6.8 L7.9 10.9 L16.2 2.8" fill="none" stroke="#109a8a" stroke-width="2.05" stroke-linecap="round" stroke-linejoin="round"/></svg>
<div class="t" style="left:1242.5px;top:634.73px;font-size:14.5px;line-height:14.5px;color:#fff;font-weight:400;letter-spacing:0px;-webkit-text-stroke:0.2px #fff;">FAI</div>
<div class="abs" style="left:342px;top:666px;width:1300px;height:1px;background:#334155"></div>
<svg class="abs" style="left:380px;top:687.0px" width="22" height="17" viewBox="0 0 22 17"><rect width="22" height="17" fill="#606776"/><path d="M1 11.2 L3.5 8 L8.5 14 L14.4 5 L21.2 15.3 V16 H1 Z" fill="#2b313e"/><circle cx="6.4" cy="4.6" r="1.6" fill="#2b313e"/></svg>
<div class="t" style="left:428px;top:678.73px;font-size:14.5px;line-height:14.5px;color:#fff;font-weight:400;letter-spacing:0.25px;-webkit-text-stroke:0.2px #fff;">Mary Horvat</div>
<div class="t" style="left:428px;top:700.23px;font-size:14.5px;line-height:14.5px;color:#fff;font-weight:400;letter-spacing:0.25px;-webkit-text-stroke:0.2px #fff;">mhurley2</div>
<div class="t" style="left:650px;top:678.73px;font-size:14.5px;line-height:14.5px;color:#fff;font-weight:400;letter-spacing:0.25px;-webkit-text-stroke:0.2px #fff;">mhurley2.FAI@mycomet.email</div>
<div class="t" style="left:872px;top:678.73px;font-size:14.5px;line-height:14.5px;color:#fff;font-weight:400;letter-spacing:0.25px;-webkit-text-stroke:0.2px #fff;">Mary Hurley</div>
<div class="t" style="left:872px;top:700.23px;font-size:14.5px;line-height:14.5px;color:#fff;font-weight:400;letter-spacing:0.25px;-webkit-text-stroke:0.2px #fff;">651608</div>
<svg class="abs" style="left:1094px;top:685.90px" width="20" height="14" viewBox="0 0 20 14"><path d="M3.8 6.8 L7.9 10.9 L16.2 2.8" fill="none" stroke="#109a8a" stroke-width="2.05" stroke-linecap="round" stroke-linejoin="round"/></svg>
<div class="t" style="left:1242.5px;top:689.73px;font-size:14.5px;line-height:14.5px;color:#fff;font-weight:400;letter-spacing:0px;-webkit-text-stroke:0.2px #fff;">FAI</div>
<div class="abs" style="left:342px;top:725px;width:1300px;height:1px;background:#334155"></div>
<svg class="abs" style="left:380px;top:746.0px" width="22" height="17" viewBox="0 0 22 17"><rect width="22" height="17" fill="#606776"/><path d="M1 11.2 L3.5 8 L8.5 14 L14.4 5 L21.2 15.3 V16 H1 Z" fill="#2b313e"/><circle cx="6.4" cy="4.6" r="1.6" fill="#2b313e"/></svg>
<div class="t" style="left:428px;top:737.73px;font-size:14.5px;line-height:14.5px;color:#fff;font-weight:400;letter-spacing:0.25px;-webkit-text-stroke:0.2px #fff;">Liz Hurley</div>
<div class="t" style="left:428px;top:759.23px;font-size:14.5px;line-height:14.5px;color:#fff;font-weight:400;letter-spacing:0.25px;-webkit-text-stroke:0.2px #fff;">lhurley2</div>
<div class="t" style="left:650px;top:737.73px;font-size:14.5px;line-height:14.5px;color:#fff;font-weight:400;letter-spacing:0.25px;-webkit-text-stroke:0.2px #fff;">liz.hurley@yahoo.ie</div>
<div class="t" style="left:872px;top:737.73px;font-size:14.5px;line-height:14.5px;color:#fff;font-weight:400;letter-spacing:0.25px;-webkit-text-stroke:0.2px #fff;">Liz Hurley</div>
<div class="t" style="left:872px;top:759.23px;font-size:14.5px;line-height:14.5px;color:#fff;font-weight:400;letter-spacing:0.25px;-webkit-text-stroke:0.2px #fff;">651607</div>
<svg class="abs" style="left:1094px;top:735.00px" width="20" height="14" viewBox="0 0 20 14"><path d="M3.8 6.8 L7.9 10.9 L16.2 2.8" fill="none" stroke="#109a8a" stroke-width="2.05" stroke-linecap="round" stroke-linejoin="round"/></svg>
<div class="t" style="left:1095px;top:759.70px;font-size:15px;line-height:15px;color:#fff;font-weight:400;letter-spacing:0.2px;-webkit-text-stroke:0.2px #fff;">30/06/2025</div>
<div class="t" style="left:1242.5px;top:748.73px;font-size:14.5px;line-height:14.5px;color:#fff;font-weight:400;letter-spacing:0px;-webkit-text-stroke:0.2px #fff;">Bay Rovers,FAI</div>
<div class="abs" style="left:342px;top:784px;width:1300px;height:1px;background:#334155"></div>
<svg class="abs" style="left:380px;top:803.0px" width="22" height="17" viewBox="0 0 22 17"><rect width="22" height="17" fill="#606776"/><path d="M1 11.2 L3.5 8 L8.5 14 L14.4 5 L21.2 15.3 V16 H1 Z" fill="#2b313e"/><circle cx="6.4" cy="4.6" r="1.6" fill="#2b313e"/></svg>
<div class="t" style="left:428px;top:794.73px;font-size:14.5px;line-height:14.5px;color:#fff;font-weight:400;letter-spacing:0.25px;-webkit-text-stroke:0.2px #fff;">Brianna Conway Smith</div>
<div class="t" style="left:428px;top:816.23px;font-size:14.5px;line-height:14.5px;color:#fff;font-weight:400;letter-spacing:0.25px;-webkit-text-stroke:0.2px #fff;">bconway3</div>
<div class="t" style="left:650px;top:794.73px;font-size:14.5px;line-height:14.5px;color:#fff;font-weight:400;letter-spacing:0.25px;-webkit-text-stroke:0.2px #fff;">bconway@yahoo.co.uk</div>
<svg class="abs" style="left:1094px;top:792.00px" width="20" height="14" viewBox="0 0 20 14"><path d="M3.8 6.8 L7.9 10.9 L16.2 2.8" fill="none" stroke="#109a8a" stroke-width="2.05" stroke-linecap="round" stroke-linejoin="round"/></svg>
<div class="t" style="left:1095px;top:816.70px;font-size:15px;line-height:15px;color:#fff;font-weight:400;letter-spacing:0.2px;-webkit-text-stroke:0.2px #fff;">02/07/2025</div>
<div class="t" style="left:1242.5px;top:805.73px;font-size:14.5px;line-height:14.5px;color:#fff;font-weight:400;letter-spacing:0px;-webkit-text-stroke:0.2px #fff;">FAI</div>
<div class="abs" style="left:342px;top:839px;width:1300px;height:1px;background:#334155"></div>
<svg class="abs" style="left:380px;top:856.5px" width="22" height="17" viewBox="0 0 22 17"><rect width="22" height="17" fill="#606776"/><path d="M1 11.2 L3.5 8 L8.5 14 L14.4 5 L21.2 15.3 V16 H1 Z" fill="#2b313e"/><circle cx="6.4" cy="4.6" r="1.6" fill="#2b313e"/></svg>
<div class="t" style="left:428px;top:848.23px;font-size:14.5px;line-height:14.5px;color:#fff;font-weight:400;letter-spacing:0.25px;-webkit-text-stroke:0.2px #fff;">Simone Lopez</div>
<div class="t" style="left:428px;top:869.73px;font-size:14.5px;line-height:14.5px;color:#fff;font-weight:400;letter-spacing:0.25px;-webkit-text-stroke:0.2px #fff;">ttestko</div>
<div class="t" style="left:650px;top:848.23px;font-size:14.5px;line-height:14.5px;color:#fff;font-weight:400;letter-spacing:0.25px;-webkit-text-stroke:0.2px #fff;">ttestko1@mail.com</div>
<svg class="abs" style="left:1094px;top:855.40px" width="20" height="14" viewBox="0 0 20 14"><path d="M3.8 6.8 L7.9 10.9 L16.2 2.8" fill="none" stroke="#109a8a" stroke-width="2.05" stroke-linecap="round" stroke-linejoin="round"/></svg>
<div class="t" style="left:1242.5px;top:859.23px;font-size:14.5px;line-height:14.5px;color:#fff;font-weight:400;letter-spacing:0px;-webkit-text-stroke:0.2px #fff;">FAI</div>
<div class="abs" style="left:0;top:891px;width:1637px;height:5px;background:#fff"></div>
<div class="abs" style="left:-5px;top:843px;width:275px;height:53px;box-sizing:border-box;border:5px solid #e31c1f"></div>
</body></html>
